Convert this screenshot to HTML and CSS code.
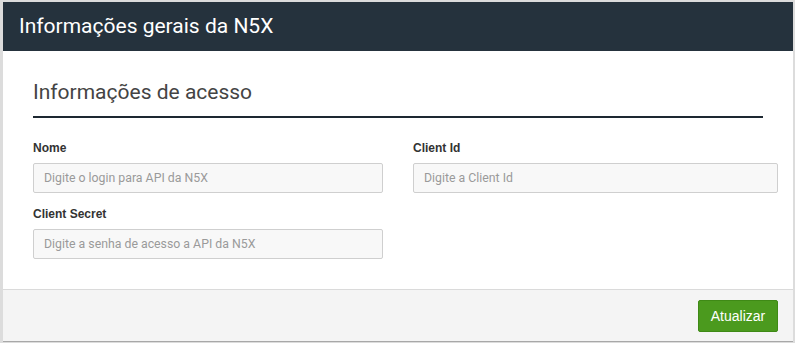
FILE: index.html
```html
<!DOCTYPE html>
<html lang="pt-BR">
<head>
    <meta charset="UTF-8">
    <meta name="viewport" content="width=device-width, initial-scale=1.0">
    <title>Informações gerais da N5X</title>
    <link rel="stylesheet" href="styles.css">
</head>
<body>
    <div class="panel">
        <div class="panel-header">Informações gerais da N5X</div>

        <div class="panel-body">
            <h2 class="section-title">Informações de acesso</h2>

            <div class="form-grid">
                <div class="field">
                    <label for="nome">Nome</label>
                    <input id="nome" type="text" placeholder="Digite o login para API da N5X">
                </div>
                <div class="field field-wide">
                    <label for="client-id">Client Id</label>
                    <input id="client-id" type="text" placeholder="Digite a Client Id">
                </div>
                <div class="field">
                    <label for="client-secret">Client Secret</label>
                    <input id="client-secret" type="password" placeholder="Digite a senha de acesso a API da N5X">
                </div>
            </div>
        </div>

        <div class="panel-footer">
            <button class="btn-success" type="button">Atualizar</button>
        </div>
    </div>
</body>
</html>
```

FILE: styles.css
```css
html, body {
    height: 100%;
}
body {
    margin: 0;
    padding: 2px 2px 1px 3px;
    box-sizing: border-box;
    background-color: #dcdcdc;
    font-family: Roboto, "Liberation Sans", Arial, sans-serif;
}
.panel {
    height: 100%;
    background: white;
    display: flex;
    flex-direction: column;
    border-bottom: 1px solid #a8a8a8;
    box-sizing: border-box;
}
.panel-header {
    height: 49px;
    flex: none;
    background: #25323d;
    color: white;
    font-size: 21px;
    line-height: 49px;
    padding-left: 16px;
}
.panel-body {
    flex: 1;
    padding: 28px 15px 0 30px;
}
.section-title {
    margin: 0 15px 0 0;
    font-size: 21px;
    font-weight: normal;
    color: #444;
    line-height: 26px;
    padding-bottom: 11px;
    border-bottom: 2px solid #1d2831;
}
.form-grid {
    display: grid;
    grid-template-columns: 350px 365px;
    column-gap: 30px;
    row-gap: 13px;
    margin-top: 22px;
}
.field label {
    display: block;
    font-family: "Liberation Sans", Arial, sans-serif;
    font-size: 12px;
    font-weight: bold;
    color: #333;
    line-height: 16px;
    margin-bottom: 7px;
}
.field input {
    display: block;
    width: 100%;
    box-sizing: border-box;
    height: 30px;
    padding: 0 10px;
    border: 1px solid #cfcfcf;
    border-radius: 2px;
    background: #f8f8f8;
    font-family: Roboto, "Liberation Sans", Arial, sans-serif;
    font-size: 12.3px;
    color: #555;
}
.field input::placeholder {
    color: #9a9a9a;
}
.panel-footer {
    flex: none;
    height: 52px;
    background: #f4f4f4;
    border-top: 1px solid #dadada;
    display: flex;
    justify-content: flex-end;
    align-items: flex-start;
    padding: 10px 15px 0 0;
    box-sizing: border-box;
}
.btn-success {
    width: 80px;
    height: 32px;
    background: #4b9a1e;
    border: 1px solid #3f8a16;
    border-radius: 2px;
    color: white;
    font-family: "Liberation Sans", Arial, sans-serif;
    font-size: 14px;
}
```
